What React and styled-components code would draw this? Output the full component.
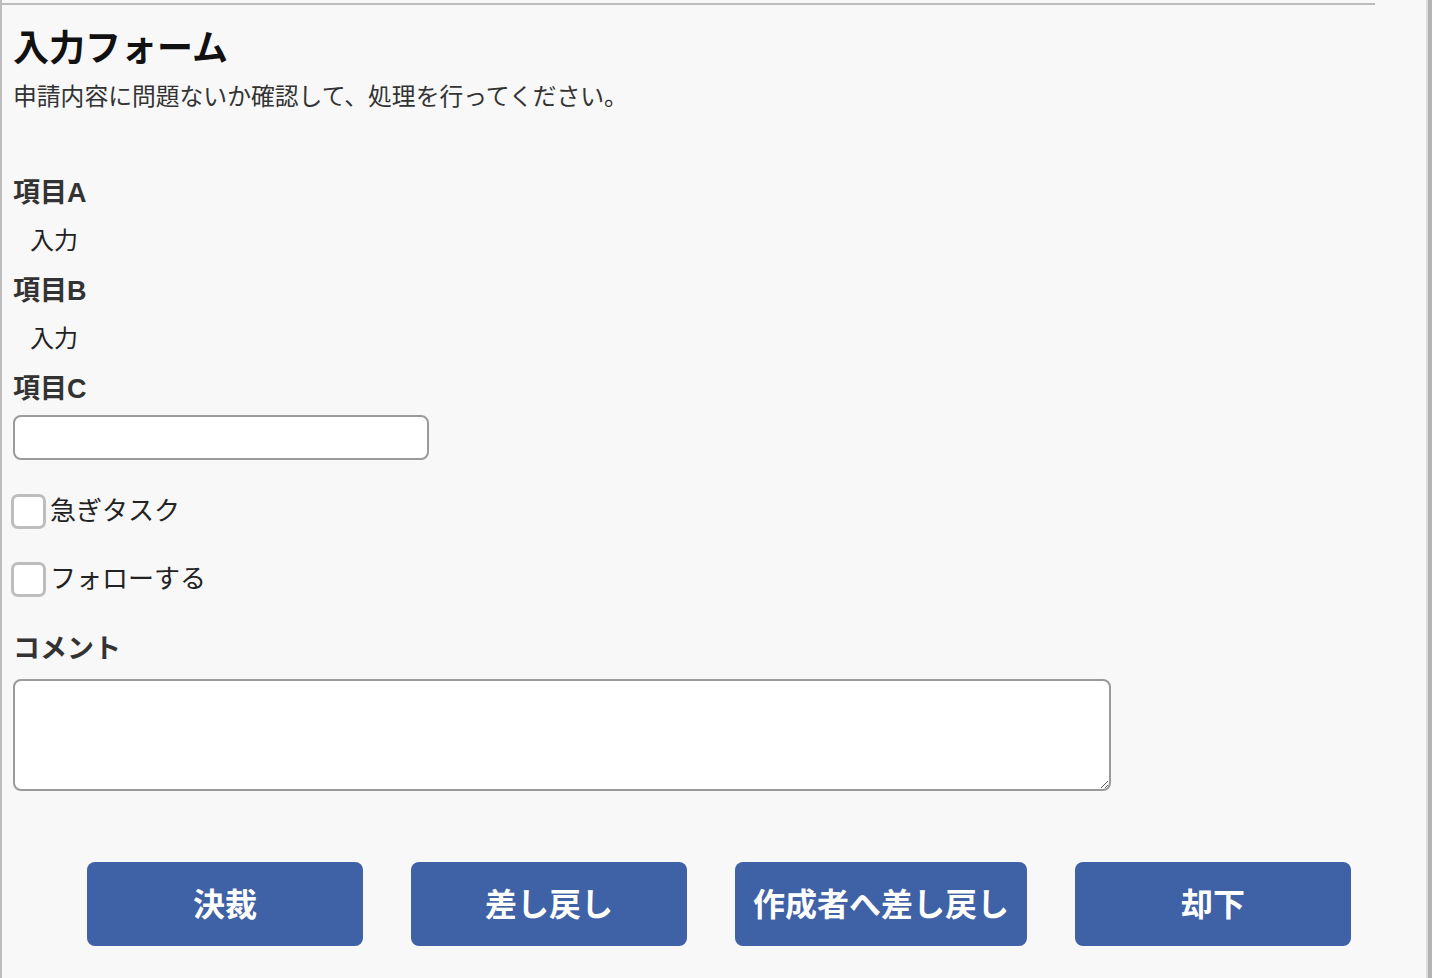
import styled, { createGlobalStyle } from 'styled-components';

const GlobalStyle = createGlobalStyle`
    html, body {
        margin: 0;
        padding: 0;
        background: #f8f8f8;
    }
    body {
        font-family: "Liberation Sans", "Noto Sans CJK JP", sans-serif;
        color: #222222;
    }
`;

const fields = [
    { label: '項目A', value: '入力' },
    { label: '項目B', value: '入力' },
];

const checks = ['急ぎタスク', 'フォローする'];

const actions = ['決裁', '差し戻し', '作成者へ差し戻し', '却下'];

export default function App() {
    return (
        <Page>
            <GlobalStyle />
            <Panel>
                <TopRule />
                <Content>
                    <Title>入力フォーム</Title>
                    <Lead>申請内容に問題ないか確認して、処理を行ってください。</Lead>

                    <Fields>
                        {fields.map((f) => (
                            <Field key={f.label}>
                                <Label>{f.label}</Label>
                                <Value>{f.value}</Value>
                            </Field>
                        ))}
                        <Field>
                            <Label>項目C</Label>
                            <TextInput type="text" />
                        </Field>
                    </Fields>

                    <Checks>
                        {checks.map((c) => (
                            <CheckRow key={c}>
                                <CheckBox type="checkbox" />
                                <CheckText>{c}</CheckText>
                            </CheckRow>
                        ))}
                    </Checks>

                    <CommentLabel>コメント</CommentLabel>
                    <Comment />

                    <Actions>
                        {actions.map((a) => (
                            <ActionButton key={a}>{a}</ActionButton>
                        ))}
                    </Actions>
                </Content>
            </Panel>
            <SideBar />
        </Page>
    );
}

const Page = styled.div`
    display: flex;
    min-height: 100vh;
`;

const Panel = styled.div`
    flex: 1;
    border-left: 2px solid #bcbcbc;
`;

const TopRule = styled.div`
    margin-top: 3px;
    width: 1373px;
    height: 2px;
    background: #bcbcbc;
`;

const Content = styled.div`
    padding: 0 0 0 11px;
    display: flex;
    flex-direction: column;
`;

const Title = styled.h1`
    margin: 24px 0 0;
    font-size: 36px;
    line-height: 40px;
    font-weight: 700;
    color: #111111;
`;

const Lead = styled.p`
    margin: 13px 0 0;
    font-size: 23.8px;
    line-height: 30px;
    color: #333333;
`;

const Fields = styled.div`
    margin-top: 63px;
    display: flex;
    flex-direction: column;
    gap: 14px;
`;

const Field = styled.div`
    display: flex;
    flex-direction: column;
`;

const Label = styled.div`
    font-size: 27px;
    line-height: 36px;
    font-weight: 700;
    color: #333333;
`;

const Value = styled.div`
    margin-top: 12px;
    padding-left: 17px;
    font-size: 24px;
    line-height: 36px;
    color: #222222;
`;

const TextInput = styled.input`
    margin-top: 8px;
    box-sizing: border-box;
    width: 416px;
    height: 45px;
    border: 2px solid #9a9a9a;
    border-radius: 8px;
    background: #ffffff;
    padding: 0 10px;
    font-size: 20px;
    outline: none;
`;

const Checks = styled.div`
    margin-top: 33px;
    display: flex;
    flex-direction: column;
    gap: 32px;
`;

const CheckRow = styled.label`
    display: flex;
    align-items: center;
    height: 36px;
    gap: 4px;
`;

const CheckBox = styled.input`
    appearance: none;
    margin: 0 0 0 -2px;
    box-sizing: border-box;
    width: 35px;
    height: 35px;
    border: 3px solid #bdbdbd;
    border-radius: 7px;
    background: #ffffff;
`;

const CheckText = styled.span`
    font-size: 26px;
    line-height: 36px;
    color: #222222;
`;

const CommentLabel = styled.div`
    margin-top: 34px;
    font-size: 27px;
    line-height: 36px;
    font-weight: 700;
    color: #333333;
`;

const Comment = styled.textarea`
    margin-top: 12px;
    box-sizing: border-box;
    width: 1098px;
    height: 112px;
    border: 2px solid #9a9a9a;
    border-radius: 8px;
    background: #ffffff;
    resize: both;
    outline: none;
    font-size: 20px;
`;

const Actions = styled.div`
    margin-top: 71px;
    padding-left: 74px;
    display: flex;
    gap: 48px;
`;

const ActionButton = styled.button`
    box-sizing: border-box;
    min-width: 276px;
    height: 84px;
    padding: 0 18px 5px;
    border: none;
    border-radius: 8px;
    background: #3f61a6;
    color: #ffffff;
    font-family: "Noto Sans CJK JP", sans-serif;
    font-size: 32px;
    font-weight: 700;
    cursor: pointer;
`;

const SideBar = styled.div`
    width: 4px;
    border-left: 2px solid #dcdcdc;
    background: #b3b3b3;
`;
